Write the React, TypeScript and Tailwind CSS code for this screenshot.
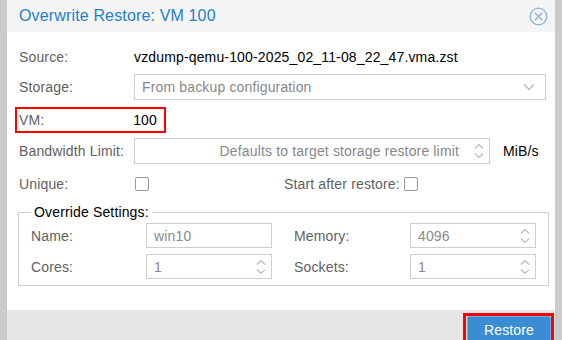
import React from "react";

const labelCls = "text-[#5f5f5f]";

function Spinner() {
  return (
    <svg width="12" height="20" viewBox="0 0 12 20" fill="none" stroke="#b9b9b9" strokeWidth="1.2">
      <path d="M2 7.5 L6 3.5 L10 7.5" />
      <path d="M2 12.5 L6 16.5 L10 12.5" />
    </svg>
  );
}

function Checkbox() {
  return <div className="h-[14px] w-[14px] rounded-[2px] border border-[#9a9a9a] bg-white" />;
}

function NumberField({ value }: { value: string }) {
  return (
    <div className="flex h-[25px] w-[126px] items-center justify-between border border-[#cfcfcf] bg-white pl-[7px] pr-[4px] text-[#8a8a8a]">
      <span>{value}</span>
      <Spinner />
    </div>
  );
}

export default function App() {
  return (
    <div className="flex h-[340px] w-[562px] overflow-hidden bg-[#cbcbcb] font-['Liberation_Sans',Arial,sans-serif] text-[14px] leading-[16px] tracking-[0.15px]">
      <div className="ml-[7px] flex w-[548px] flex-col bg-white">
        {/* Header */}
        <div className="flex h-[32px] shrink-0 items-center justify-between bg-[#f5f5f5] pl-[12px] pr-[7px]">
          <span className="text-[16px] text-[#1e7fcc]">Overwrite Restore: VM 100</span>
          <svg width="19" height="19" viewBox="0 0 19 19" fill="none" stroke="#86b0de" strokeWidth="1.3">
            <circle cx="9.5" cy="9.5" r="8.3" />
            <path d="M5.8 5.8 L13.2 13.2 M13.2 5.8 L5.8 13.2" />
          </svg>
        </div>

        {/* Body */}
        <div className="flex flex-1 flex-col pl-[12px]">
          <div className="mt-[12px] flex h-[26px] items-center">
            <span className={`w-[115px] ${labelCls}`}>Source:</span>
            <span className="text-black">vzdump-qemu-100-2025_02_11-08_22_47.vma.zst</span>
          </div>

          <div className="mt-[4px] flex h-[26px] items-center">
            <span className={`w-[115px] ${labelCls}`}>Storage:</span>
            <div className="flex h-[26px] w-[412px] items-center justify-between border border-[#cfcfcf] pl-[7px] pr-[10px] text-[#888]">
              <span>From backup configuration</span>
              <svg width="12" height="8" viewBox="0 0 12 8" fill="none" stroke="#b5b5b5" strokeWidth="1.2">
                <path d="M1 1.5 L6 6.5 L11 1.5" />
              </svg>
            </div>
          </div>

          <div className="ml-[-4px] mt-[7px] flex h-[26px] w-[151px] items-center justify-between border-2 border-[#ff0000] pl-[2px] pr-[7px]">
            <span className={labelCls}>VM:</span>
            <span className="text-black">100</span>
          </div>

          <div className="mt-[5px] flex h-[26px] items-center">
            <span className={`w-[115px] ${labelCls}`}>Bandwidth Limit:</span>
            <div className="flex h-[26px] w-[356px] items-center justify-end gap-[14px] border border-[#cfcfcf] pr-[4px] text-[#888]">
              <span>Defaults to target storage restore limit</span>
              <Spinner />
            </div>
            <span className="ml-[13px] text-black">MiB/s</span>
          </div>

          <div className="mt-[7px] flex h-[26px] items-center">
            <span className={`w-[116px] ${labelCls}`}>Unique:</span>
            <Checkbox />
            <span className={`ml-[135px] w-[120px] ${labelCls}`}>Start after restore:</span>
            <Checkbox />
          </div>

          <fieldset className="ml-[-1px] mt-[7px] w-[531px] border border-[#cfcfcf] pb-[6px] pl-[12px]">
            <legend className="px-[3px] leading-[16px] text-black">Override Settings:</legend>
            <div className="mt-[3px] flex h-[25px] items-center">
              <span className={`w-[115px] ${labelCls}`}>Name:</span>
              <div className="flex h-[25px] w-[126px] items-center border border-[#cfcfcf] pl-[7px] text-[#8a8a8a]">
                win10
              </div>
              <span className={`ml-[22px] w-[116px] ${labelCls}`}>Memory:</span>
              <NumberField value="4096" />
            </div>
            <div className="mt-[6px] flex h-[25px] items-center">
              <span className={`w-[115px] ${labelCls}`}>Cores:</span>
              <NumberField value="1" />
              <span className={`ml-[22px] w-[116px] ${labelCls}`}>Sockets:</span>
              <NumberField value="1" />
            </div>
          </fieldset>
        </div>

        {/* Footer */}
        <div className="flex h-[30px] shrink-0 justify-end bg-[#e5e5e5] pr-[1px] pt-[3px]">
          <div className="flex h-[34px] w-[91px] border-[3px] border-[#ff0000] pl-[1px]">
            <div className="flex h-full flex-1 items-start justify-center rounded-[2px] border border-[#6aaee4] bg-[#3a8dd3] pt-[5px] text-white">
              Restore
            </div>
          </div>
        </div>
      </div>
    </div>
  );
}
